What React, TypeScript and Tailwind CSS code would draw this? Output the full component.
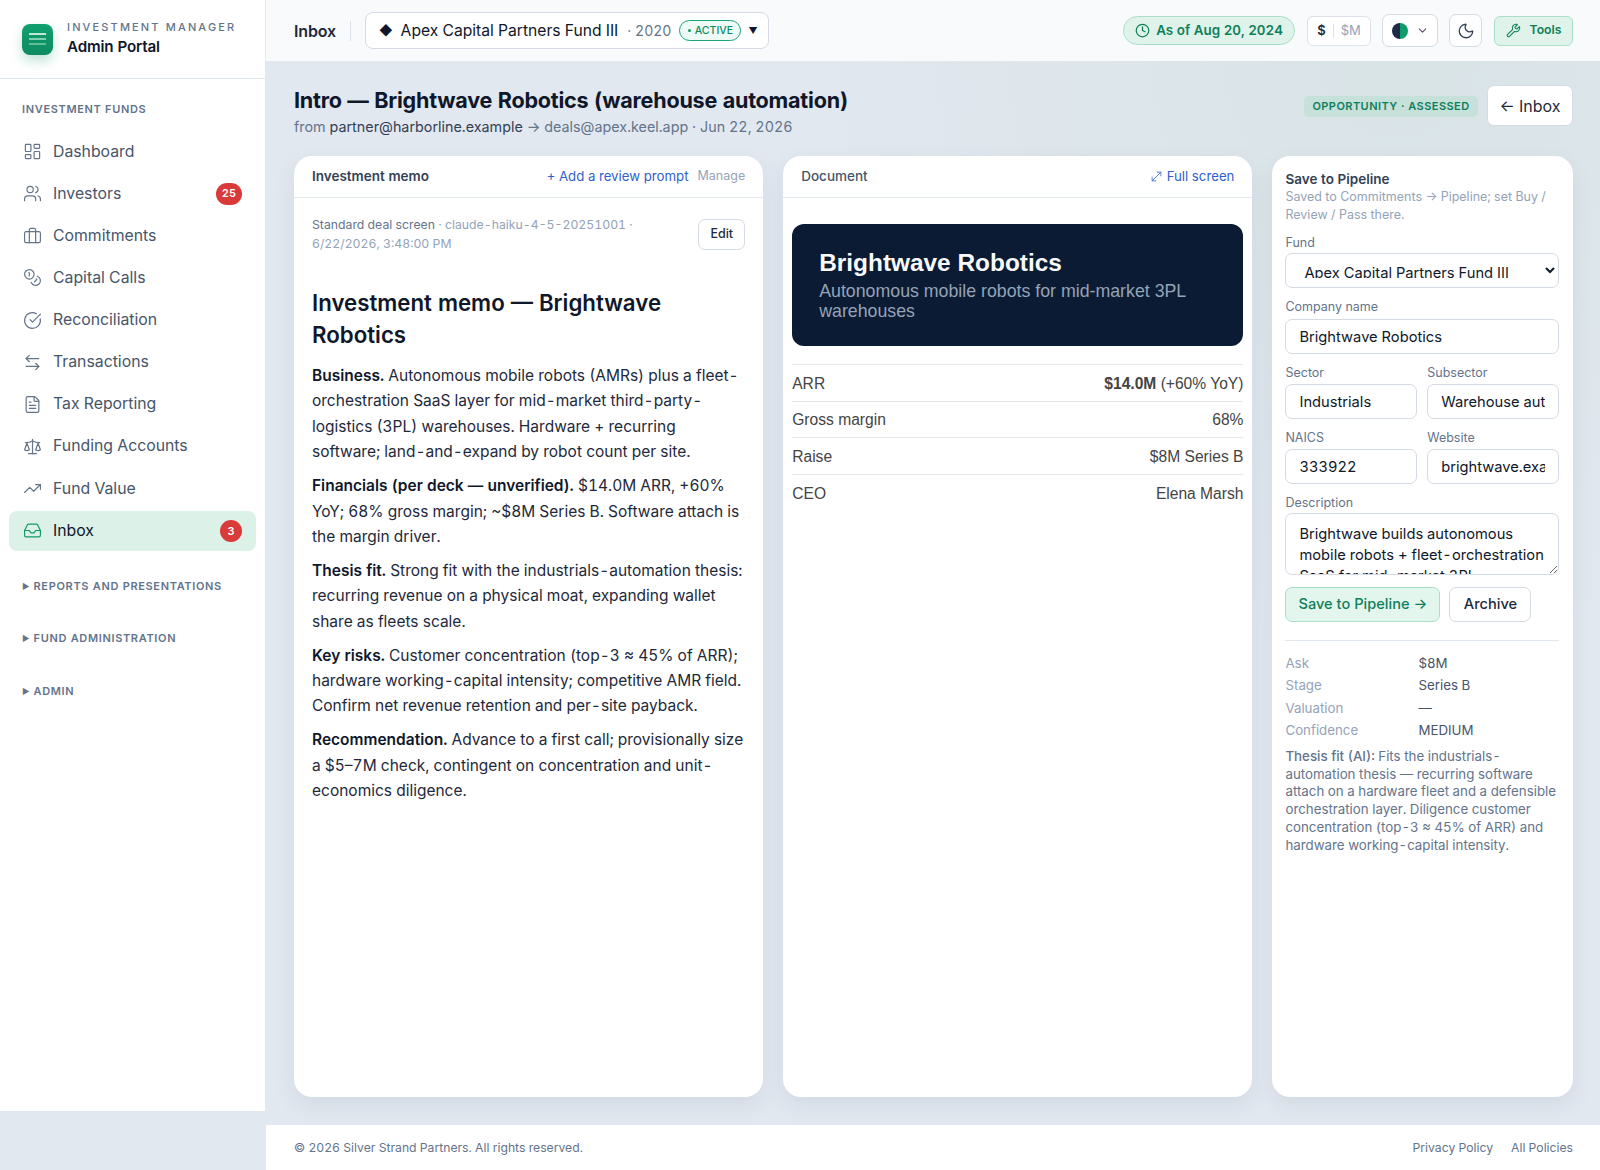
import {
  ArrowLeftRight,
  ChevronDown,
  CircleCheckBig,
  Clock,
  Coins,
  FileText,
  Inbox,
  LayoutDashboard,
  Moon,
  MoveDiagonal,
  Scale,
  TrendingUp,
  Users,
  Wrench,
} from "lucide-react";
import type { ReactNode } from "react";

const BriefcaseIcon = ({ className }: { className?: string }) => (
  <svg viewBox="0 0 24 24" fill="none" stroke="currentColor" strokeWidth="1.5" strokeLinecap="round" strokeLinejoin="round" className={className}>
    <rect x="2" y="7" width="20" height="14" rx="2" />
    <path d="M16 21V5a2 2 0 0 0-2-2h-4a2 2 0 0 0-2 2v16" />
  </svg>
);

const navItems = [
  { label: "Dashboard", icon: LayoutDashboard },
  { label: "Investors", icon: Users, badge: "25" },
  { label: "Commitments", icon: BriefcaseIcon },
  { label: "Capital Calls", icon: Coins },
  { label: "Reconciliation", icon: CircleCheckBig },
  { label: "Transactions", icon: ArrowLeftRight },
  { label: "Tax Reporting", icon: FileText },
  { label: "Funding Accounts", icon: Scale },
  { label: "Fund Value", icon: TrendingUp },
  { label: "Inbox", icon: Inbox, badge: "3", active: true },
];

const Sidebar = () => (
  <aside className="flex h-[1111px] w-[266px] shrink-0 flex-col border-r border-[#e2e8f0] bg-white">
    <div className="flex h-[79px] items-center gap-[14px] border-b border-[#e2e8f0] pl-[22px]">
      <div className="flex h-[31px] w-[31px] flex-col items-center justify-center gap-[3px] rounded-[8px] bg-gradient-to-b from-[#10a06f] to-[#0f8a60] shadow-[0_6px_12px_rgba(16,150,105,0.25)]">
        <span className="h-[2px] w-[17px] bg-[#bfe9d6]" />
        <span className="h-[2px] w-[17px] bg-[#7fd0ae]" />
        <span className="h-[2px] w-[17px] bg-[#5dbf98]" />
      </div>
      <div>
        <div className="text-[11px] leading-[16px] font-medium tracking-[0.195em] text-[#64748b]">INVESTMENT MANAGER</div>
        <div className="text-[15.2px] leading-[24px] font-semibold tracking-[-0.01em] text-[#0f172a]">Admin Portal</div>
      </div>
    </div>
    <div className="pt-[23px] pl-[22px] text-[11px] leading-[14px] font-semibold tracking-[0.06em] text-[#64748b]">INVESTMENT FUNDS</div>
    <nav className="mt-[15.5px] flex flex-col gap-[2.15px] px-[9px]">
      {navItems.map((item) => (
        <div
          key={item.label}
          className={
            item.active
              ? "flex h-[40px] items-center rounded-[8px] bg-[#dcf1e8] pr-[14px] pl-[14px] text-[#0f172a]"
              : "flex h-[40px] items-center rounded-[8px] pr-[14px] pl-[14px] text-[#475569]"
          }
        >
          <item.icon className={item.active ? "h-[19px] w-[19px] text-[#0f9a6c]" : "h-[19px] w-[19px] text-[#64748b]"} strokeWidth={1.5} />
          <span className="ml-[11px] flex-1 text-[15.8px] leading-[20px]">{item.label}</span>
          {item.badge && (
            <span className="flex h-[22px] min-w-[22px] items-center justify-center rounded-full bg-[#d93a3a] px-[6px] text-[11px] font-semibold text-white">
              {item.badge}
            </span>
          )}
        </div>
      ))}
    </nav>
    <div className="mt-[28px] flex flex-col gap-[38.5px] pl-[22px]">
      {["REPORTS AND PRESENTATIONS", "FUND ADMINISTRATION", "ADMIN"].map((label) => (
        <div key={label} className="flex h-[14px] items-center text-[11px] font-semibold tracking-[0.06em] text-[#64748b]">
          <span className="mr-[4px] text-[8px] tracking-normal">▶</span>
          {label}
        </div>
      ))}
    </div>
  </aside>
);

const TopBar = () => (
  <header className="flex h-[61px] shrink-0 items-center bg-[#f8fafc] pr-[27px] pl-[28px]">
    <span className="text-[16px] font-semibold tracking-[-0.01em] text-[#1e293b]">Inbox</span>
    <span className="mx-[14px] h-[20px] w-px bg-[#dbe1e9]" />
    <div className="flex h-[37px] w-[404px] items-center whitespace-nowrap rounded-[8px] border border-[#d5dbe4] bg-white pl-[13px] text-[#0f172a]">
      <span className="text-[13px]">◆</span>
      <span className="ml-[8px] text-[15.65px]">Apex Capital Partners Fund III</span>
      <span className="ml-[9px] text-[14px] text-[#64748b]">· 2020</span>
      <span className="ml-[8px] flex h-[21px] w-[62px] items-center justify-center gap-[4px] rounded-full border border-[#17a578] bg-[#eefaf5] text-[10.5px] font-medium text-[#0f8a60]">
        <span className="h-[3px] w-[3px] rounded-full bg-[#0f9a6c]" />
        ACTIVE
      </span>
      <span className="ml-[7px] text-[9px]">▼</span>
    </div>
    <div className="ml-auto flex items-center">
      <div className="flex h-[29px] w-[172px] items-center justify-center gap-[6px] rounded-full border border-[#a9dfc8] bg-[#dff3ea] text-[13.4px] font-semibold text-[#0f7f5a]">
        <Clock className="h-[15px] w-[15px]" strokeWidth={2} />
        As of Aug 20, 2024
      </div>
      <div className="ml-[12px] flex h-[30px] w-[64px] items-center justify-center rounded-[6px] border border-[#dde2ea] bg-white text-[13px]">
        <span className="font-semibold text-[#1e293b]">$</span>
        <span className="mx-[7px] h-[14px] w-px bg-[#dde2ea]" />
        <span className="text-[#94a3b8]">$M</span>
      </div>
      <div className="ml-[11px] flex h-[33px] w-[56px] items-center justify-center gap-[4px] rounded-[7px] border border-[#d5dbe4] bg-white">
        <span className="h-[16px] w-[8px] rounded-l-full bg-[#1e2a4a]" />
        <span className="-ml-[4px] h-[16px] w-[8px] rounded-r-full bg-[#0f9a6c]" />
        <ChevronDown className="ml-[4px] h-[13px] w-[13px] text-[#475569]" />
      </div>
      <div className="ml-[11px] flex h-[33px] w-[33px] items-center justify-center rounded-[7px] border border-[#d5dbe4] bg-white">
        <Moon className="h-[18px] w-[18px] text-[#334155]" strokeWidth={1.75} />
      </div>
      <div className="ml-[12px] flex h-[30px] w-[79px] items-center justify-center gap-[9px] rounded-[6px] border border-[#a9dfc8] bg-[#dff3ea] text-[12.25px] font-semibold text-[#0f7f5a]">
        <Wrench className="h-[15px] w-[15px]" strokeWidth={1.75} />
        Tools
      </div>
    </div>
  </header>
);

const Card = ({ className, children }: { className: string; children: ReactNode }) => (
  <section className={`${className} rounded-[18px] bg-white shadow-[0_8px_20px_rgba(100,116,139,0.12)]`}>{children}</section>
);

const Para = ({ lead, children }: { lead: string; children: string }) => (
  <p className="mb-[8.5px]">
    <strong className="font-semibold text-[#0f172a]">{lead}</strong> {children}
  </p>
);

const MemoCard = () => (
  <Card className="flex w-[470px] flex-col">
    <div className="flex h-[42px] items-center border-b border-[#e2e8f0] pr-[18px] pl-[18px]">
      <span className="text-[13.5px] font-semibold text-[#334155]">Investment memo</span>
      <span className="ml-auto text-[13.25px] text-[#2f5fce]">+ Add a review prompt</span>
      <span className="ml-[9px] text-[12.5px] text-[#94a3b8]">Manage</span>
    </div>
    <div className="px-[18px]">
      <div className="mt-[21px] flex items-start justify-between">
        <div className="-mt-[4px] w-[340px] text-[12.25px] leading-[19px] text-[#94a3b8]">
          <span className="text-[#64748b]">Standard deal screen</span> · claude-haiku-4-5-20251001 · 6/22/2026, 3:48:00 PM
        </div>
        <button className="h-[31px] w-[47px] rounded-[7px] border border-[#d5dbe4] text-[12.5px] font-medium text-[#1e293b]">Edit</button>
      </div>
      <h2 className="mt-[34px] text-[22.25px] leading-[31.5px] font-semibold text-[#0f172a]">Investment memo — Brightwave Robotics</h2>
      <div className="mt-[13px] text-[15.5px] leading-[25.4px] text-[#1e293b]">
        <Para lead="Business.">
          Autonomous mobile robots (AMRs) plus a fleet-orchestration SaaS layer for mid-market third-party-logistics (3PL) warehouses. Hardware + recurring software; land-and-expand by robot count per site.
        </Para>
        <Para lead="Financials (per deck — unverified).">
          $14.0M ARR, +60% YoY; 68% gross margin; ~$8M Series B. Software attach is the margin driver.
        </Para>
        <Para lead="Thesis fit.">
          Strong fit with the industrials-automation thesis: recurring revenue on a physical moat, expanding wallet share as fleets scale.
        </Para>
        <Para lead="Key risks.">
          Customer concentration (top-3 ≈ 45% of ARR); hardware working-capital intensity; competitive AMR field. Confirm net revenue retention and per-site payback.
        </Para>
        <Para lead="Recommendation.">
          Advance to a first call; provisionally size a $5–7M check, contingent on concentration and unit-economics diligence.
        </Para>
      </div>
    </div>
  </Card>
);

const docRows = [
  { label: "ARR", value: <><b className="font-bold">$14.0M</b> (+60% YoY)</> },
  { label: "Gross margin", value: "68%" },
  { label: "Raise", value: "$8M Series B" },
  { label: "CEO", value: "Elena Marsh" },
];

const DocumentCard = () => (
  <Card className="flex w-[470px] flex-col">
    <div className="flex h-[42px] items-center border-b border-[#e2e8f0] pr-[18px] pl-[18px]">
      <span className="text-[13.5px] font-medium text-[#475569]">Document</span>
      <span className="ml-auto flex items-center gap-[3px] text-[13.25px] text-[#2f5fce]">
        <MoveDiagonal className="h-[15px] w-[15px]" strokeWidth={1.25} />
        Full screen
      </span>
    </div>
    <div className="px-[9px] pt-[26px] font-['Liberation_Sans',Arial,sans-serif]">
      <div className="h-[122px] rounded-[12px] bg-[#0b1b33] px-[27px] pt-[24px]">
        <div className="text-[24.4px] leading-[30px] font-bold text-[#f8fafc]">Brightwave Robotics</div>
        <div className="mt-[3px] text-[17.75px] leading-[20px] text-[#94a3b8]">Autonomous mobile robots for mid-market 3PL warehouses</div>
      </div>
      <div className="mt-[18px] text-[15.6px] text-[#444]">
        {docRows.map((row) => (
          <div key={row.label} className="flex h-[36.7px] items-center justify-between border-t border-[#e5e7eb] pt-[1px]">
            <span>{row.label}</span>
            <span>{row.value}</span>
          </div>
        ))}
      </div>
    </div>
  </Card>
);

const inputClass = "h-[35px] w-full min-w-0 rounded-[7px] border border-[#d5dbe4] bg-white px-[13px] text-[14.7px] text-[#0f172a] outline-none";
const labelClass = "mb-[3px] block text-[12.5px] leading-[17px] text-[#64748b]";

const Field = ({ label, value }: { label: string; value: string }) => (
  <div className="min-w-0 flex-1">
    <label className={labelClass}>{label}</label>
    <input readOnly value={value} className={inputClass} />
  </div>
);

const facts = [
  ["Ask", "$8M"],
  ["Stage", "Series B"],
  ["Valuation", "—"],
  ["Confidence", "MEDIUM"],
];

const PipelineCard = () => (
  <Card className="flex w-[301px] flex-col pt-[14px] pr-[14px] pl-[13px]">
    <div className="text-[13.5px] leading-[18px] font-semibold text-[#334155]">Save to Pipeline</div>
    <p className="text-[12.5px] leading-[18px] text-[#94a3b8]">Saved to Commitments → Pipeline; set Buy / Review / Pass there.</p>
    <div className="mt-[10px]">
      <label className="mb-[2px] block text-[12.5px] leading-[17px] text-[#64748b]">Fund</label>
      <select className="h-[35px] w-full rounded-[7px] border border-[#d5dbe4] bg-white py-[9px] pl-[14px] text-[14.7px] text-[#0f172a] outline-none">
        <option>Apex Capital Partners Fund III</option>
      </select>
    </div>
    <div className="mt-[10px]">
      <label className="mb-[4px] block text-[12.5px] leading-[17px] text-[#64748b]">Company name</label>
      <input readOnly value="Brightwave Robotics" className={inputClass} />
    </div>
    <div className="mt-[10px] flex gap-[10px]">
      <Field label="Sector" value="Industrials" />
      <Field label="Subsector" value="Warehouse automation" />
    </div>
    <div className="mt-[10px] flex gap-[10px]">
      <Field label="NAICS" value="333922" />
      <Field label="Website" value="brightwave.example" />
    </div>
    <div className="mt-[10px]">
      <label className="mb-[2px] block text-[12.5px] leading-[17px] text-[#64748b]">Description</label>
      <textarea
        readOnly
        className="block h-[62px] w-full rounded-[7px] border border-[#d5dbe4] px-[13px] py-[10px] text-[14.7px] leading-[21px] text-[#0f172a] outline-none"
        value="Brightwave builds autonomous mobile robots + fleet-orchestration SaaS for mid-market 3PL warehouses."
      />
    </div>
    <div className="mt-[12px] flex gap-[9px]">
      <button className="h-[35px] w-[155px] rounded-[7px] border border-[#a9dfc8] bg-[#e2f6ee] text-[14.6px] font-medium text-[#0f7f5a]">Save to Pipeline →</button>
      <button className="h-[35px] w-[82px] rounded-[7px] border border-[#d5dbe4] bg-white text-[14.6px] font-medium text-[#1e293b]">Archive</button>
    </div>
    <div className="mt-[18px] border-t border-[#e2e8f0] pt-[12px]">
      {facts.map(([k, v]) => (
        <div key={k} className="flex h-[22.2px] items-center text-[13.3px]">
          <span className="w-[133px] text-[#94a3b8]">{k}</span>
          <span className="text-[#475569]">{v}</span>
        </div>
      ))}
    </div>
    <p className="mt-[6px] text-[13.3px] leading-[17.8px] text-[#64748b]">
      <span className="font-medium">Thesis fit (AI):</span> Fits the industrials-automation thesis — recurring software attach on a hardware fleet and a defensible orchestration layer. Diligence customer concentration (top-3 ≈ 45% of ARR) and hardware working-capital intensity.
    </p>
  </Card>
);

export default function App() {
  return (
    <div className="flex h-[1170px] w-[1600px] overflow-hidden bg-[#e2e8f0] font-['Inter',sans-serif] tabular-nums">
      <Sidebar />
      <div className="flex min-w-0 flex-1 flex-col">
        <TopBar />
        <main className="flex min-h-0 flex-1 flex-col bg-[radial-gradient(ellipse_at_85%_0%,#d9e4e7,#e2e8f0_40%)] pr-[27px] pb-[28px] pl-[28px]">
          <div className="flex h-[95px] shrink-0 items-start justify-between pt-[24px]">
            <div>
              <h1 className="text-[21.55px] leading-[30px] font-bold tracking-[-0.01em] text-[#0f172a]">Intro — Brightwave Robotics (warehouse automation)</h1>
              <p className="pt-[1px] text-[14.35px] leading-[22px] text-[#64748b]">
                from <span className="text-[#334155]">partner@harborline.example</span> → deals@apex.keel.app · Jun 22, 2026
              </p>
            </div>
            <div className="flex items-center gap-[9px]">
              <span className="mt-[2px] flex h-[21px] w-[174px] items-center justify-center rounded-[5px] bg-[#c6e0da] text-[11px] font-semibold tracking-[0.04em] text-[#0f7f5a]">OPPORTUNITY · ASSESSED</span>
              <button className="h-[41px] w-[86px] rounded-[7px] border border-[#d5dbe4] bg-white text-[16px] text-[#1e293b]">← Inbox</button>
            </div>
          </div>
          <div className="flex min-h-0 flex-1 gap-[20px]">
            <MemoCard />
            <DocumentCard />
            <PipelineCard />
          </div>
        </main>
        <footer className="flex h-[45px] shrink-0 items-center justify-between bg-white pt-[1px] pr-[27px] pl-[28px] text-[12.2px] text-[#64748b]">
          <span>© 2026 Silver Strand Partners. All rights reserved.</span>
          <span className="flex gap-[18px]">
            <span>Privacy Policy</span>
            <span>All Policies</span>
          </span>
        </footer>
      </div>
    </div>
  );
}
